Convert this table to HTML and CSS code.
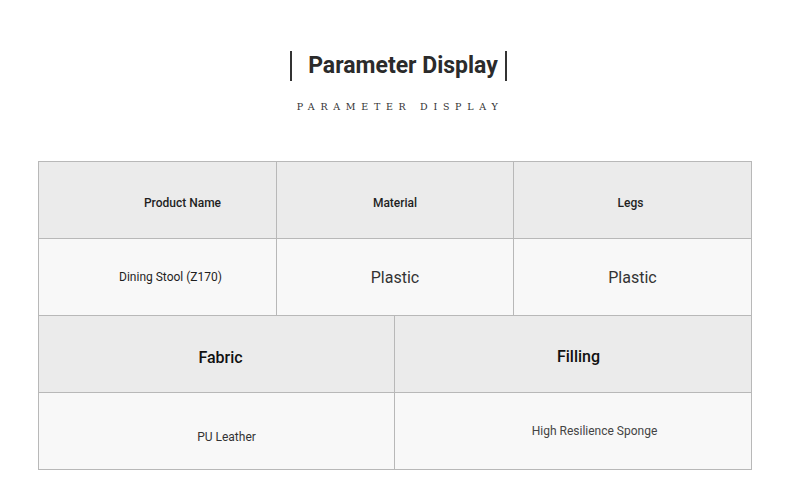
FILE: index.html
```html
<!DOCTYPE html>
<html>
<head>
<meta charset="utf-8">
<link rel="stylesheet" href="styles.css">
</head>
<body>
<header class="heading">
  <div class="title-wrap"><h1 class="title">Parameter Display</h1></div>
  <p class="subtitle">PARAMETER DISPLAY</p>
</header>
<section class="table">
  <div class="row row-3 head">
    <div class="cell c-product">Product Name</div>
    <div class="cell c-material">Material</div>
    <div class="cell c-legs">Legs</div>
  </div>
  <div class="row row-3 data">
    <div class="cell c-stool">Dining Stool (Z170)</div>
    <div class="cell big">Plastic</div>
    <div class="cell big">Plastic</div>
  </div>
  <div class="row row-2 head">
    <div class="cell big strong c-fabric">Fabric</div>
    <div class="cell big strong c-filling">Filling</div>
  </div>
  <div class="row row-2 data">
    <div class="cell c-pu">PU Leather</div>
    <div class="cell c-sponge">High Resilience Sponge</div>
  </div>
</section>
</body>
</html>
```
FILE: styles.css
```css
* { box-sizing: border-box; }
body {
  margin: 0;
  background: #fff;
  font-family: Roboto, "Liberation Sans", sans-serif;
  color: #222;
}
.heading {
  display: flex;
  flex-direction: column;
  align-items: center;
  padding-top: 51px;
}
.title-wrap {
  height: 30px;
  border-left: 2px solid #333;
  border-right: 2px solid #333;
  padding: 0 7px 0 16px;
  margin-left: 7px;
  display: flex;
  align-items: center;
}
.title {
  margin: 0;
  font-size: 23px;
  font-weight: 700;
  color: #2b2b2b;
  line-height: 30px;
}
.subtitle {
  margin: 19px 0 0 0;
  font-family: "DejaVu Serif", "Liberation Serif", serif;
  font-size: 9.5px;
  letter-spacing: 5.7px;
  color: #333;
  line-height: 14px;
  padding-left: 10px;
}
.table {
  margin: 47px 0 0 38px;
  width: 714px;
  border-left: 1px solid #b8b8b8;
  border-top: 1px solid #b8b8b8;
}
.row { display: grid; }
.row-3 { grid-template-columns: 238px 237px 238px; }
.row-2 { grid-template-columns: 356px 357px; }
.head { background: #ebebeb; }
.data { background: #f8f8f8; }
.cell {
  height: 77px;
  border-right: 1px solid #b8b8b8;
  border-bottom: 1px solid #b8b8b8;
  display: flex;
  align-items: center;
  justify-content: center;
  font-size: 12px;
  color: #1f1f1f;
}
.big { font-size: 16px; color: #333; }
.strong { font-weight: 500; color: #111; }
.c-product { padding: 5px 0 0 50px; }
.c-material { padding-top: 5px; }
.c-stool { padding-left: 26px; }
.c-legs { padding: 5px 4px 0 0; }
.c-fabric { padding: 7px 0 0 8px; }
.c-filling { padding: 4px 0 0 11px; }
.c-pu { padding: 11px 0 0 20px; color: #333; }
.c-sponge { padding-left: 43px; color: #444; }
.head .cell:not(.big) { font-weight: 500; }
```
